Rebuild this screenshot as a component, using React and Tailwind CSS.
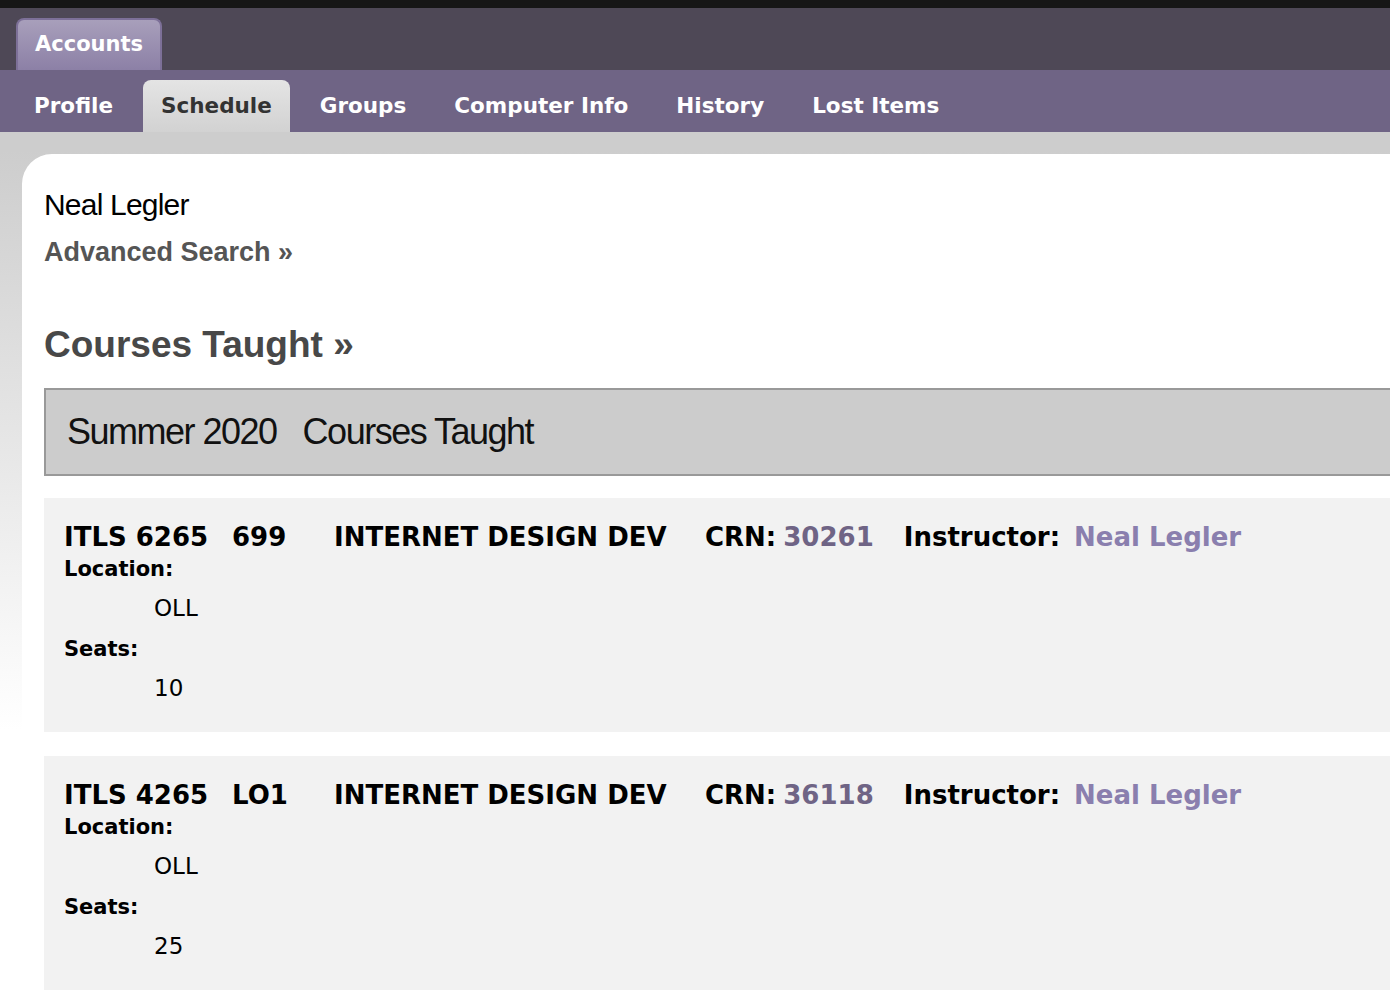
import React from "react";

const tabs = ["Profile", "Schedule", "Groups", "Computer Info", "History", "Lost Items"];

const courses = [
  { code: "ITLS 6265", section: "699", title: "INTERNET DESIGN DEV", crn: "30261", location: "OLL", seats: "10" },
  { code: "ITLS 4265", section: "LO1", title: "INTERNET DESIGN DEV", crn: "36118", location: "OLL", seats: "25" },
];

const tahoma = { fontFamily: '"DejaVu Sans", Verdana, sans-serif' };
const helv = { fontFamily: '"Liberation Sans", Arial, sans-serif' };

const CourseCard = ({ course }) => {
  return (
    <div className="bg-[#f2f2f2] pl-5 pt-[22px] pb-[30px] text-black" style={tahoma}>
      {/* title row */}
      <div className="flex items-center h-[35px] text-[26px] font-bold whitespace-nowrap">
        <span className="w-[168px]">{course.code}</span>
        <span className="w-[102px]">{course.section}</span>
        <span className="w-[371px]">{course.title}</span>
        <span>CRN:</span>
        <a href="#" className="ml-[7px] text-[#6f6485]">{course.crn}</a>
        <span className="ml-[30px]">Instructor:</span>
        <a href="#" className="ml-[14px] text-[#8a7fae]">Neal Legler</a>
      </div>
      <div className="mt-[1px] text-[21px] font-bold leading-[26px]">Location:</div>
      <div className="mt-3 pl-[90px] text-[23px] leading-[28px]">{course.location}</div>
      <div className="mt-[14px] text-[21px] font-bold leading-[26px]">Seats:</div>
      <div className="mt-3 pl-[90px] text-[23px] leading-[28px]">{course.seats}</div>
    </div>
  );
};

const App = () => {
  return (
    <div className="min-h-screen overflow-hidden bg-[linear-gradient(to_bottom,#cdcdcd_0px,#cdcdcd_150px,#ffffff_730px)]">
      {/* top strip */}
      <div className="h-2 bg-[#161616]" />
      {/* app bar */}
      <div className="h-[62px] bg-[#4e4856] flex items-end pl-4" style={tahoma}>
        <div className="h-[52px] px-[17px] flex items-center rounded-t-[8px] border-x-2 border-t-2 border-[#7d7098] bg-[linear-gradient(to_bottom,#a89fbb,#8c80a6)] text-white text-[21px] font-bold">
          Accounts
        </div>
      </div>
      {/* sub nav */}
      <div className="h-[62px] bg-[#6f6485] flex items-end pl-4 gap-3" style={tahoma}>
        {tabs.map((t) =>
          t === "Schedule" ? (
            <div
              key={t}
              className="h-[52px] px-[18px] flex items-center rounded-t-[8px] bg-[linear-gradient(to_bottom,#e4e4e4,#d2d2d2)] text-[#333] text-[21.5px] font-bold"
            >
              {t}
            </div>
          ) : (
            <div key={t} className="h-[52px] px-[18px] flex items-center text-white text-[21.5px] font-bold">
              {t}
            </div>
          )
        )}
      </div>
      {/* content panel */}
      <div className="mt-[22px] ml-[22px] -mr-6 rounded-tl-[30px] bg-white pl-[22px] pt-[35px] pb-10">
        <div className="text-[30px] leading-[32px] tracking-[-0.8px] text-black" style={helv}>
          Neal Legler
        </div>
        <a href="#" className="block mt-4 text-[27px] leading-[30px] font-bold text-[#555]" style={helv}>
          Advanced Search »
        </a>
        <h2 className="mt-[58px] text-[37px] leading-[40px] font-bold text-[#484848]" style={helv}>
          Courses Taught »
        </h2>
        <div className="mt-[23px] h-[88px] border-2 border-[#999] bg-[#cccccc] flex items-center pl-[21px] text-[36px] tracking-[-1.5px] text-[#111]" style={helv}>
          <span>Summer 2020</span>
          <span className="ml-[26px]">Courses Taught</span>
        </div>
        <div className="mt-[22px] flex flex-col gap-6">
          {courses.map((c) => (
            <CourseCard key={c.crn} course={c} />
          ))}
        </div>
      </div>
    </div>
  );
};

export default App;
